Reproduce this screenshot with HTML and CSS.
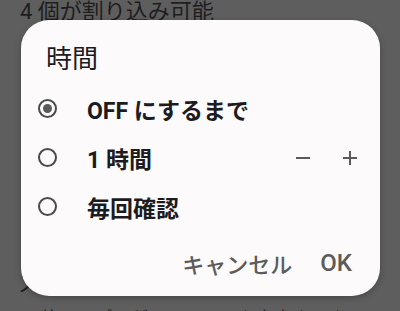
FILE: index.html
```html
<!DOCTYPE html>
<html lang="ja">
<head>
<meta charset="UTF-8">
<link rel="stylesheet" href="styles.css">
</head>
<body>
<div class="screen">
  <div class="behind">
    <div class="line">4 個が割り込み可能</div>
    <div class="line peek">ス</div>
    <div class="line small">他のアプリがこのモードを上書きでき</div>
  </div>

  <div class="dialog">
    <div class="title">時間</div>
    <div class="options">
      <div class="option">
        <i class="radio checked"></i>
        <span class="label">OFF にするまで</span>
      </div>
      <div class="option">
        <i class="radio"></i>
        <span class="label">1 時間</span>
        <div class="steps">
          <svg class="step" viewBox="0 0 16 16"><path d="M1 8h14" /></svg>
          <svg class="step" viewBox="0 0 16 16"><path d="M1 8h14M8 1v14" /></svg>
        </div>
      </div>
      <div class="option">
        <i class="radio"></i>
        <span class="label">毎回確認</span>
      </div>
    </div>
    <div class="actions">
      <span class="btn">キャンセル</span>
      <span class="btn ok">OK</span>
    </div>
  </div>
</div>
</body>
</html>
```

FILE: styles.css
```css
* {
  box-sizing: border-box;
}

body {
  margin: 0;
  font-family: Roboto, "Noto Sans CJK JP", sans-serif;
}

.screen {
  width: 400px;
  height: 311px;
  background: #5e5e5e;
  position: relative;
  overflow: hidden;
}

.behind {
  padding: 0 20px;
  color: #1e1e1e;
}

.behind .line {
  font-size: 22px;
  line-height: 22px;
  margin-top: 1px;
  white-space: nowrap;
}
.behind .peek {
  margin-top: 250px;
  margin-left: -2px;
}
.behind .small {
  margin-top: 13px;
  padding-left: 20px;
  font-size: 18px;
}

.dialog {
  position: absolute;
  left: 21px;
  top: 20px;
  width: 359px;
  height: 276px;
  border-radius: 28px;
  background: #fcfafb;
  box-shadow: 0 2px 6px rgb(0 0 0 / .25);
  padding: 24px 22px 0 17px;
  display: flex;
  flex-direction: column;
}

.title {
  font-size: 26px;
  line-height: 30px;
  color: #1c1b1f;
  padding-left: 8px;
}

.options {
  margin-top: 10px;
}

.option {
  height: 49px;
  display: flex;
  align-items: center;
}

.radio {
  width: 19px;
  height: 19px;
  border: 2px solid #4a4a4a;
  border-radius: 50%;
  display: grid;
  place-items: center;
  flex: none;
}
.radio.checked::after {
  content: "";
  width: 9px;
  height: 9px;
  border-radius: 50%;
  background: #5a5a5a;
}

.label {
  margin-left: 30px;
  font-size: 23px;
  font-weight: 700;
  color: #1c1b1f;
}

.steps {
  margin-left: auto;
  display: flex;
  gap: 31px;
}

.step {
  width: 16px;
  height: 16px;
  stroke: #5a5a5a;
  stroke-width: 2;
  fill: none;
}

.actions {
  margin-top: 12px;
  height: 40px;
  display: flex;
  justify-content: flex-end;
  align-items: center;
  gap: 28px;
  padding-right: 6px;
}

.btn {
  font-size: 22px;
  font-weight: 500;
  color: #5b5b5b;
}
.btn.ok {
  font-size: 24px;
}
```
